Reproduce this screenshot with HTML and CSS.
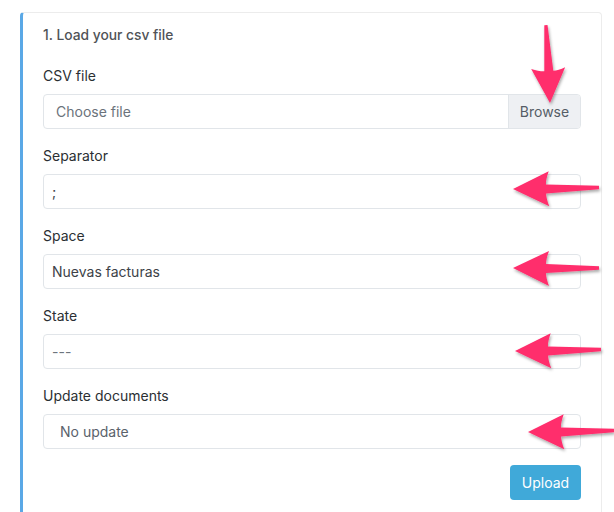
FILE: index.html
```html
<!DOCTYPE html>
<html>
<head>
<meta charset="utf-8">
<link rel="stylesheet" href="styles.css">
</head>
<body>
<div class="page">
  <div class="card">
    <div class="card-title">1. Load your csv file</div>
    <div class="form-group">
      <label class="label">CSV file</label>
      <div class="file-input">
        <span class="file-text">Choose file</span>
        <span class="file-btn">Browse</span>
      </div>
    </div>
    <div class="form-group">
      <label class="label">Separator</label>
      <div class="control">;</div>
    </div>
    <div class="form-group">
      <label class="label">Space</label>
      <div class="control">Nuevas facturas</div>
    </div>
    <div class="form-group">
      <label class="label">State</label>
      <div class="control control-muted">---</div>
    </div>
    <div class="form-group">
      <label class="label">Update documents</label>
      <div class="control control-select">No update</div>
    </div>
    <div class="actions">
      <button class="btn-upload">Upload</button>
    </div>
  </div>
</div>
<svg class="annotations" width="614" height="512" viewBox="0 0 614 512">
  <defs>
    <filter id="sh" x="-20%" y="-20%" width="140%" height="140%">
      <feDropShadow dx="1" dy="2" stdDeviation="1.5" flood-color="#000" flood-opacity="0.35"/>
    </filter>
    <path id="arr" d="M0 0 L36 -17 Q33 -9 33 -4 L86 -1.7 L86 1.7 L33 5 Q33 10 36 18 Z"/>
    <path id="arr-short" d="M0 0 L35 -17 Q32 -9 32 -4 L78 -1.6 L78 1.6 L32 5 Q32 10 35 17 Z"/>
  </defs>
  <g fill="#ff2d6c" filter="url(#sh)">
    <use href="#arr-short" transform="translate(550 103) rotate(-93)"/>
    <use href="#arr" transform="translate(513 189) rotate(-1)"/>
    <use href="#arr" transform="translate(513 268)"/>
    <use href="#arr" transform="translate(515 351) rotate(-1)"/>
    <use href="#arr" transform="translate(528 432) rotate(-1)"/>
  </g>
</svg>
</body>
</html>
```

FILE: styles.css
```css
* { box-sizing: border-box; }
html, body { margin: 0; padding: 0; background: #fff; }
body {
  font-family: Inter, "Noto Sans", "Liberation Sans", sans-serif;
  color: #2b2f33;
  font-size: 14px;
  line-height: 21px;
  width: 614px;
  height: 512px;
  overflow: hidden;
  position: relative;
}
.page {
  padding: 12px 12px 0 20px;
}
.card {
  border: 1px solid #ececec;
  border-left: 3px solid #5aa8e6;
  border-radius: 4px;
  background: #fff;
  padding: 12px 20px 20px 20px;
  height: 520px;
}
.card-title {
  font-size: 13.8px;
  font-weight: 500;
  color: #505357;
  line-height: 20px;
  margin-bottom: 20px;
}
.form-group {
  margin-bottom: 16px;
}
.label {
  display: block;
  margin-bottom: 8px;
  line-height: 21px;
  color: #2b2f33;
}
.control, .file-input {
  height: 35px;
  border: 1px solid #e1e5e9;
  border-radius: 4px;
  padding: 6px 8px;
  color: #3d4248;
  display: flex;
  align-items: center;
}
.control-muted { color: #6c757d; }
.control-select { padding-left: 16px; color: #5a626b; }
.file-input {
  padding: 0;
  justify-content: space-between;
  overflow: hidden;
}
.file-text {
  padding-left: 12px;
  color: #6b737b;
}
.file-btn {
  height: 100%;
  width: 72px;
  background: #eef0f3;
  border-left: 1px solid #e1e5e9;
  color: #555d66;
  display: flex;
  align-items: center;
  justify-content: center;
}
.actions {
  display: flex;
  justify-content: flex-end;
}
.btn-upload {
  font: inherit;
  font-size: 14px;
  background: #40a9d9;
  color: #fff;
  border: 0;
  border-radius: 4px;
  height: 35px;
  width: 71px;
  padding: 0;
}
.annotations {
  position: absolute;
  left: 0;
  top: 0;
  pointer-events: none;
}
```
